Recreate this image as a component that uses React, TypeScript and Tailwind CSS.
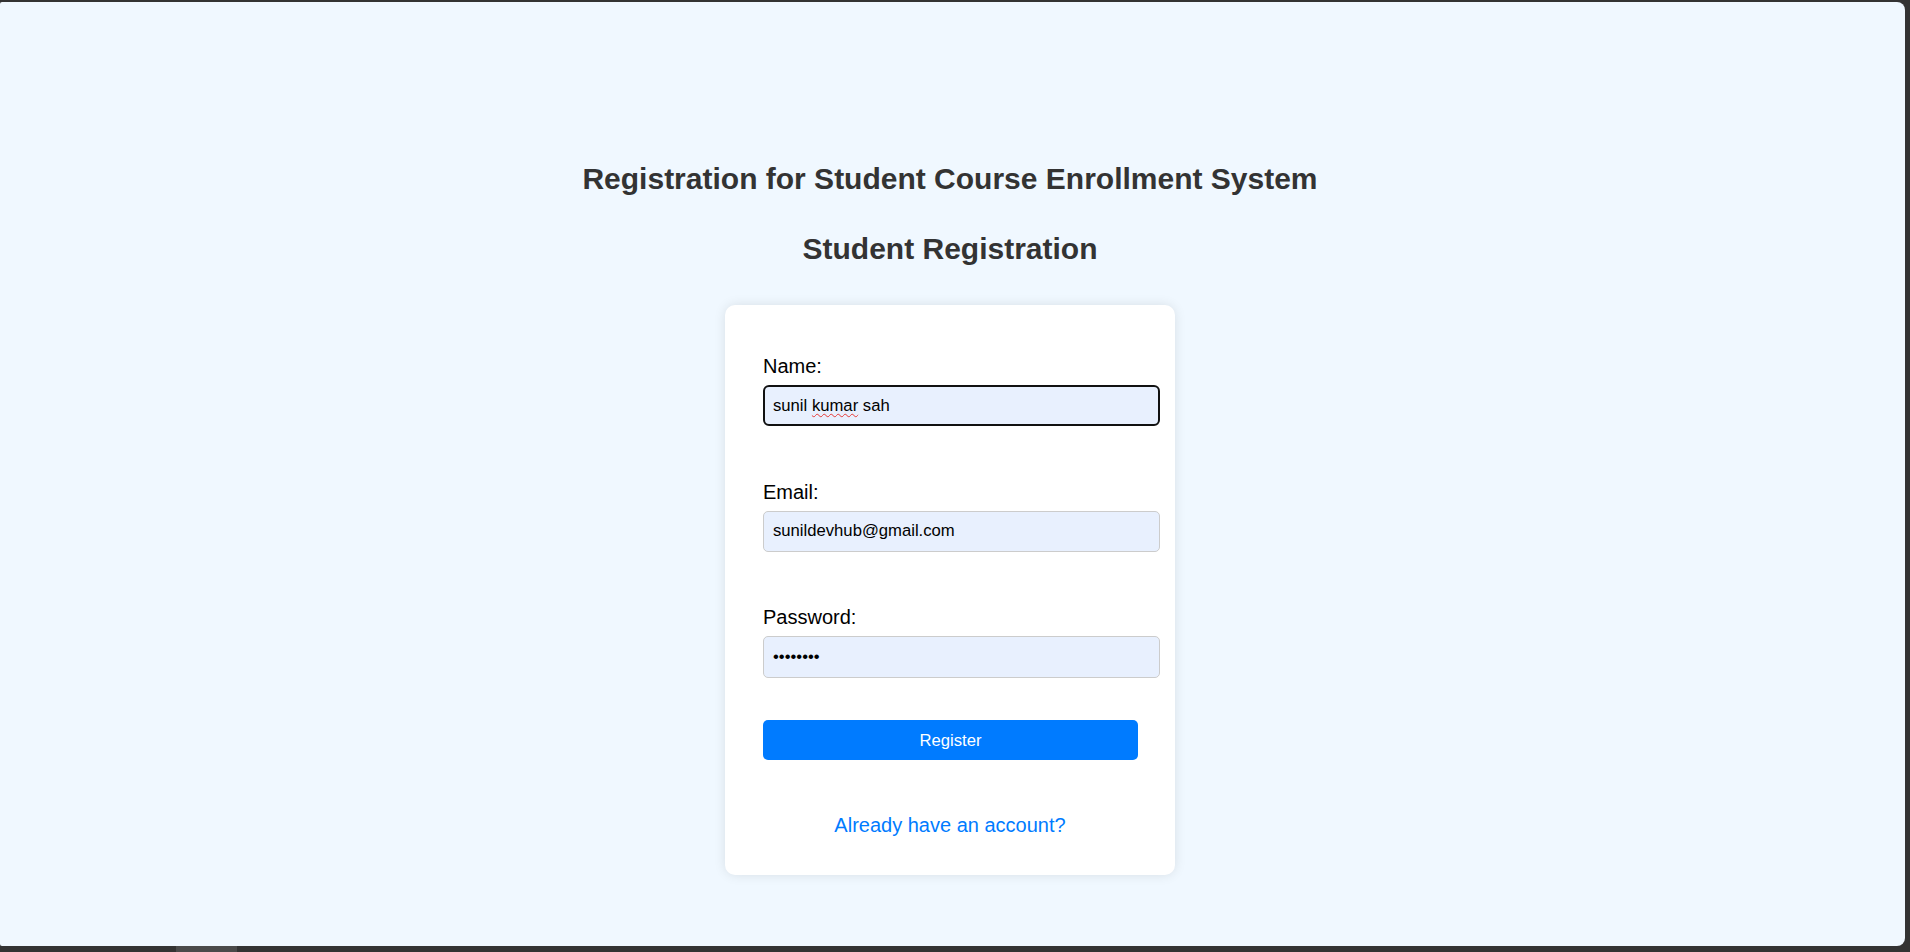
export default function App() {
  return (
    <div className="flex h-[952px] w-[1910px] flex-col overflow-hidden bg-[#333333] pt-[2px] font-['Liberation_Sans',Arial,sans-serif]">
      {/* Page panel */}
      <div className="flex min-h-0 flex-1 pr-[5px]">
        <main className="flex flex-1 flex-col items-center rounded-l-[2px] rounded-r-[8px] bg-[#f0f8ff] pr-[5px] pt-[160px]">
          <h1 className="text-[30px] font-bold leading-[34px] text-[#333]">
            Registration for Student Course Enrollment System
          </h1>
          <h2 className="mt-[36px] text-[30px] font-bold leading-[34px] text-[#333]">
            Student Registration
          </h2>

          {/* Card */}
          <div className="mt-[39px] w-[450px] rounded-[10px] bg-white pb-[38px] pt-[50px] shadow-[0_0_12px_rgba(0,0,0,0.1)]">
            <form className="pl-[38px]" onSubmit={(e) => e.preventDefault()}>
              <label className="block text-[20px] leading-[23px] text-black">Name:</label>
              <div className="mt-[6.5px] flex h-[41.5px] w-[397px] items-center rounded-[6px] border-2 border-[#111] bg-[#e8f0fe] px-[8px] text-[16.67px] text-black">
                <span>
                  sunil{' '}
                  <span className="underline decoration-[#e53935] decoration-wavy decoration-1 underline-offset-[2px]">
                    kumar
                  </span>{' '}
                  sah
                </span>
              </div>

              <label className="mt-[54.5px] block text-[20px] leading-[23px] text-black">Email:</label>
              <input
                type="email"
                readOnly
                value="sunildevhub@gmail.com"
                className="mt-[7px] block h-[41.5px] w-[397px] rounded-[5px] border border-[#ccc] bg-[#e8f0fe] px-[9px] text-[16.67px] text-black outline-none"
              />

              <label className="mt-[54px] block text-[20px] leading-[23px] text-black">Password:</label>
              <input
                type="password"
                readOnly
                value="password"
                className="mt-[7px] block h-[41.5px] w-[397px] rounded-[5px] border border-[#ccc] bg-[#e8f0fe] px-[9px] text-[16.67px] text-black outline-none"
              />

              <button
                type="submit"
                className="mt-[42.5px] block h-[40px] w-[375px] rounded-[5px] bg-[#007bff] text-[16.67px] text-white"
              >
                Register
              </button>
            </form>

            <p className="mt-[53.5px] text-center text-[20px] leading-[23px] text-[#007bff]">
              <a href="#">Already have an account?</a>
            </p>
          </div>
        </main>
      </div>

      {/* Bottom strip */}
      <div className="h-[6px] shrink-0 pl-[176px]">
        <div className="h-full w-[61px] bg-[#4a4a4a]" />
      </div>
    </div>
  );
}
